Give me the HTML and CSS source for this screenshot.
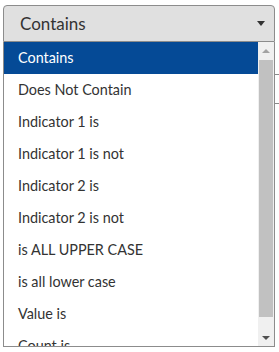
FILE: index.html
```html
<!DOCTYPE html>
<html>
<head>
<meta charset="utf-8">
<link rel="stylesheet" href="styles.css">
</head>
<body>
<div class="bg-ticks"><span class="tick t1"></span><span class="tick t2"></span></div>
<div class="select">
  <div class="select-head">
    <span class="head-label">Contains</span>
    <span class="caret"></span>
  </div>
  <div class="select-list">
    <ul class="options">
      <li class="opt selected">Contains</li>
      <li class="opt">Does Not Contain</li>
      <li class="opt">Indicator 1 is</li>
      <li class="opt">Indicator 1 is not</li>
      <li class="opt">Indicator 2 is</li>
      <li class="opt">Indicator 2 is not</li>
      <li class="opt">is ALL UPPER CASE</li>
      <li class="opt">is all lower case</li>
      <li class="opt">Value is</li>
      <li class="opt">Count is</li>
    </ul>
    <div class="scrollbar">
      <div class="sb-btn"><span class="sb-up"></span></div>
      <div class="sb-track"><div class="sb-thumb"></div></div>
      <div class="sb-btn"><span class="sb-down"></span></div>
    </div>
  </div>
</div>
</body>
</html>
```
FILE: styles.css
```css
html, body {
  margin: 0;
  padding: 0;
  background: #ffffff;
}
body {
  font-family: Lato, "Open Sans", sans-serif;
  position: relative;
  width: 279px;
  height: 352px;
  overflow: hidden;
}
.bg-ticks {
  position: absolute;
  left: 275px;
  top: 0;
}
.tick {
  position: absolute;
  left: 0;
  width: 4px;
  height: 1px;
  background: #8a8a8a;
}
.t1 { top: 74px; }
.t2 { top: 103px; }
.select {
  position: relative;
  margin: 5px 0 0 3px;
  width: 272px;
}
.select-head {
  box-sizing: border-box;
  height: 37px;
  border: 1px solid #8c8c8c;
  border-radius: 4px 4px 0 0;
  background: #e0e0e0;
  display: flex;
  align-items: center;
  justify-content: space-between;
  padding: 0 9px 0 16px;
}
.head-label {
  font-size: 17px;
  color: #333333;
}
.caret {
  width: 0;
  height: 0;
  border-left: 4px solid transparent;
  border-right: 4px solid transparent;
  border-top: 5px solid #333333;
}
.select-list {
  box-sizing: border-box;
  height: 305px;
  border: 1px solid #8c8c8c;
  border-top: none;
  display: flex;
  overflow: hidden;
  background: #ffffff;
}
.options {
  list-style: none;
  margin: 0;
  padding: 0;
  flex: 1;
  overflow: hidden;
}
.opt {
  height: 32px;
  line-height: 32px;
  padding-left: 14px;
  font-size: 14.4px;
  color: #333333;
  white-space: nowrap;
}
.opt.selected {
  background: #054a96;
  color: #ffffff;
}
.scrollbar {
  width: 16px;
  background: #f0f0f0;
  display: flex;
  flex-direction: column;
}
.sb-btn {
  height: 17px;
  display: flex;
  align-items: center;
  justify-content: center;
}
.sb-up {
  width: 0; height: 0;
  border-left: 4px solid transparent;
  border-right: 4px solid transparent;
  border-bottom: 4px solid #a3a3a3;
}
.sb-down {
  width: 0; height: 0;
  border-left: 4px solid transparent;
  border-right: 4px solid transparent;
  border-top: 4px solid #505050;
}
.sb-track {
  flex: 1;
  padding: 1px 1px 0 1px;
}
.sb-thumb {
  height: 257px;
  background: #c1c1c1;
}
```
